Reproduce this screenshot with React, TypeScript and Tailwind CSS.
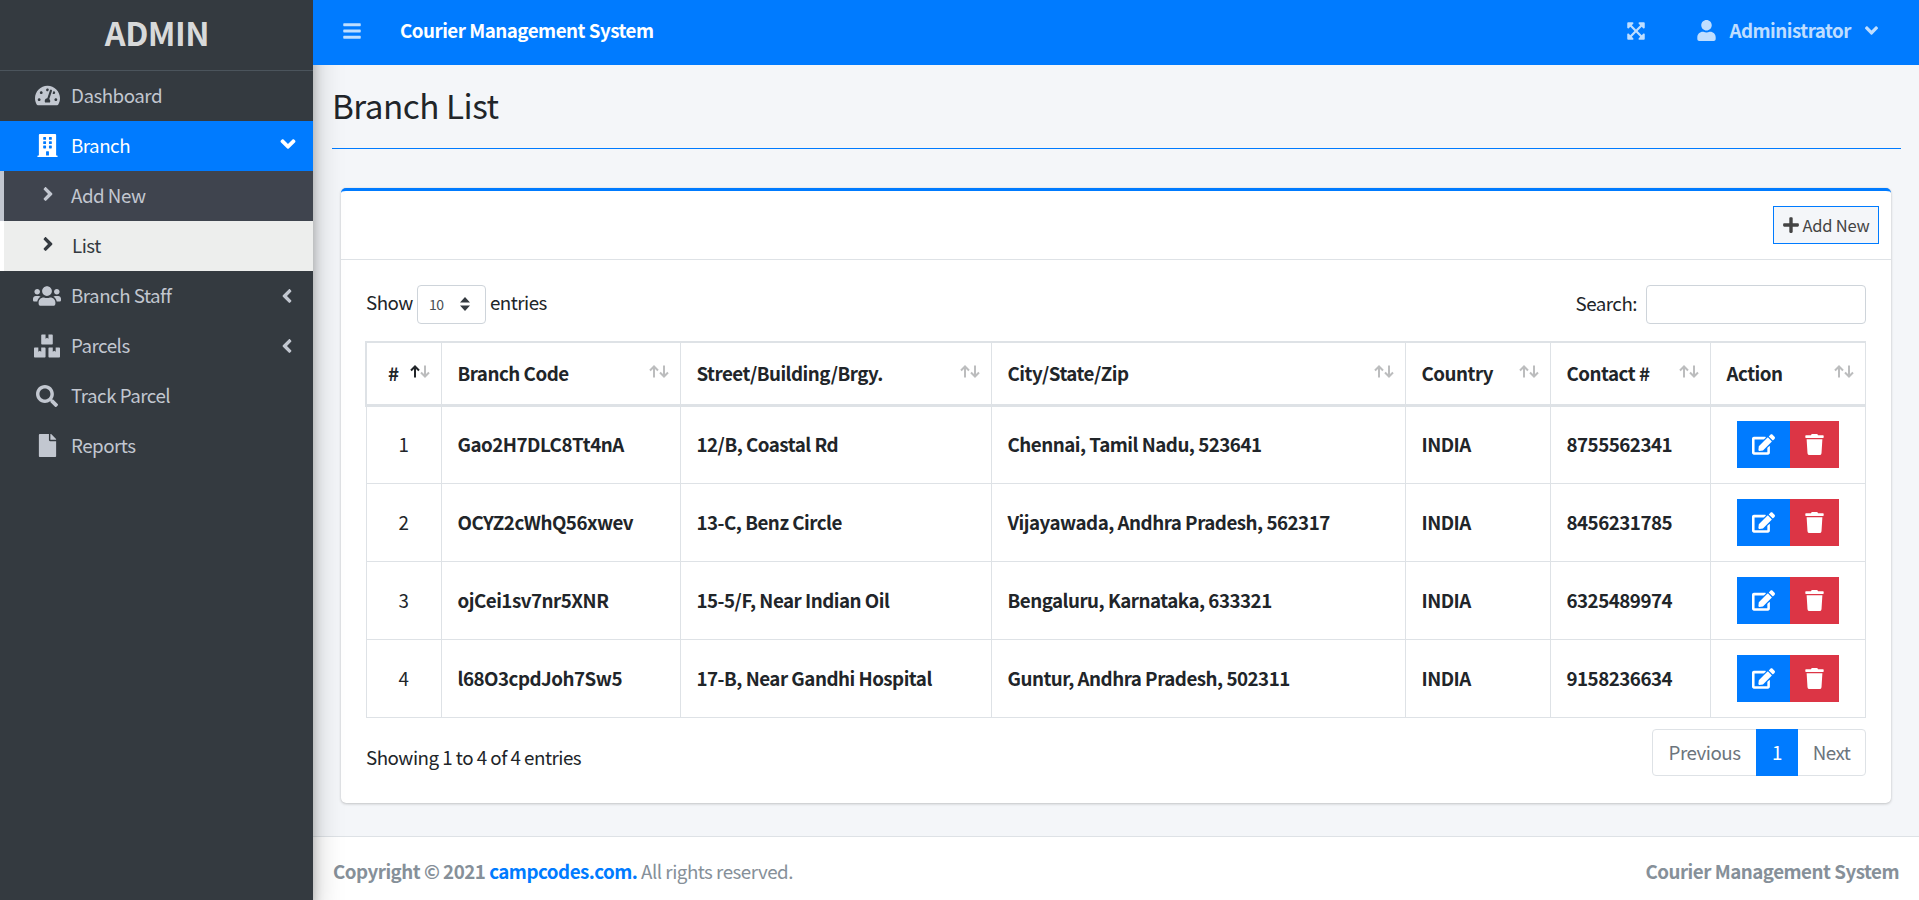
import React from 'react';
import {
  FaTachometerAlt,
  FaBuilding,
  FaAngleDown,
  FaAngleLeft,
  FaAngleRight,
  FaUsers,
  FaBoxes,
  FaSearch,
  FaFile,
  FaBars,
  FaExpandArrowsAlt,
  FaUser,
  FaPlus,
  FaEdit,
  FaTrash,
} from 'react-icons/fa';

const branches = [
  { id: 1, code: 'Gao2H7DLC8Tt4nA', street: '12/B, Coastal Rd', city: 'Chennai, Tamil Nadu, 523641', country: 'INDIA', contact: '8755562341' },
  { id: 2, code: 'OCYZ2cWhQ56xwev', street: '13-C, Benz Circle', city: 'Vijayawada, Andhra Pradesh, 562317', country: 'INDIA', contact: '8456231785' },
  { id: 3, code: 'ojCei1sv7nr5XNR', street: '15-5/F, Near Indian Oil', city: 'Bengaluru, Karnataka, 633321', country: 'INDIA', contact: '6325489974' },
  { id: 4, code: 'l68O3cpdJoh7Sw5', street: '17-B, Near Gandhi Hospital', city: 'Guntur, Andhra Pradesh, 502311', country: 'INDIA', contact: '9158236634' },
];

const columns = ['Branch Code', 'Street/Building/Brgy.', 'City/State/Zip', 'Country', 'Contact #', 'Action'];

function SortArrows({ active }: { active?: boolean }) {
  return (
    <svg width="20" height="13" viewBox="0 0 20 13" fill="none" strokeWidth="2" className="mt-[-3px] shrink-0">
      <g stroke="#212529" strokeOpacity={active ? 1 : 0.3}>
        <path d="M5 12.5V1.5M1 5.5l4-4 4 4" />
      </g>
      <g stroke="#212529" strokeOpacity="0.3">
        <path d="M15 .5v11M11 7.5l4 4 4-4" />
      </g>
    </svg>
  );
}

function NavItem({ icon, label, right }: { icon: React.ReactNode; label: string; right?: React.ReactNode }) {
  return (
    <div className="flex h-[50px] items-center pb-[1px] text-[#c2c7d0]">
      <span className="ml-[33px] flex w-[28px] shrink-0 justify-center">{icon}</span>
      <span className="ml-[10px]">{label}</span>
      <span className="ml-auto mr-[15px] text-[22px]">{right}</span>
    </div>
  );
}

export default function App() {
  return (
    <div className="flex h-screen overflow-hidden bg-[#f4f6f9] font-['Noto_Sans_CJK_SC','Noto_Sans',sans-serif] text-[18.75px] tracking-[-0.5px] text-[#212529]">
      {/* Sidebar */}
      <aside className="relative z-10 w-[313px] shrink-0 bg-[#343a40] shadow-[0_14px_28px_rgba(0,0,0,0.25),0_10px_10px_rgba(0,0,0,0.22)]">
        <div className="flex h-[71px] items-center justify-center border-b border-[#4b545c] pb-[6px] pl-[1px] text-[32.5px] font-bold text-[#d8d9da]">
          ADMIN
        </div>
        <NavItem icon={<FaTachometerAlt className="text-[25px]" />} label="Dashboard" />
        <div className="flex h-[50px] items-center bg-[#007bff] pb-[1px] text-white">
          <span className="ml-[33px] flex w-[28px] shrink-0 justify-center"><FaBuilding className="text-[23px]" /></span>
          <span className="ml-[10px]">Branch</span>
          <FaAngleDown className="ml-auto mr-[13px] mt-[-3px] text-[24px]" />
        </div>
        <div className="flex h-[50px] items-center border-l-4 border-[#c2c7d0] bg-[#3f444e] pb-[1px] text-[#c2c7d0]">
          <FaAngleRight className="ml-[33px] mt-[-3px] text-[22px]" />
          <span className="ml-[12px]">Add New</span>
        </div>
        <div className="flex h-[50px] items-center border-l-4 border-white bg-[#edeeed] pb-[1px] text-[#343a40]">
          <FaAngleRight className="ml-[33px] mt-[-3px] text-[22px]" />
          <span className="ml-[13px]">List</span>
        </div>
        <NavItem icon={<FaUsers className="text-[28px]" />} label="Branch Staff" right={<FaAngleLeft />} />
        <NavItem icon={<FaBoxes className="text-[26px]" />} label="Parcels" right={<FaAngleLeft />} />
        <NavItem icon={<FaSearch className="text-[22px]" />} label="Track Parcel" />
        <NavItem icon={<FaFile className="text-[23px]" />} label="Reports" />
      </aside>

      <div className="flex min-w-0 flex-1 flex-col">
        {/* Top bar */}
        <header className="relative z-20 flex h-[65px] shrink-0 items-center bg-[#007bff] pb-[4px]">
          <FaBars className="ml-[29px] text-[20px] text-white/75" />
          <span className="ml-[38px] font-bold text-white">Courier Management System</span>
          <FaExpandArrowsAlt className="ml-auto text-[20px] text-white/75" />
          <FaUser className="ml-[50px] text-[21px] text-white/75" />
          <span className="ml-[12px] font-bold text-white/75">Administrator</span>
          <FaAngleDown className="ml-[10px] mr-[37px] text-[21px] text-white/75" />
        </header>

        {/* Page heading */}
        <div className="ml-[19px] mr-[18px] flex h-[84px] shrink-0 items-center border-b border-[#007bff] pb-[3px]">
          <h1 className="text-[33.25px] font-normal">Branch List</h1>
        </div>

        {/* Card */}
        <main className="mx-[28px] mt-[39px] h-[615px] shrink-0 rounded-[5px] border-t-[3px] border-[#007bff] bg-white shadow-[0_0_1px_rgba(0,0,0,0.13),0_1px_3px_rgba(0,0,0,0.2)]">
          <div className="flex h-[69px] items-start justify-end border-b border-[#dee2e6] pr-[12px] pt-[15px]">
            <button className="flex h-[38px] w-[106px] items-center justify-center border border-[#007bff] bg-[#f4f6f9] text-[16.5px] tracking-[-0.2px] text-[#444]">
              <FaPlus className="mr-[2px] text-[18px]" />
              Add New
            </button>
          </div>

          <div className="px-[25px] pt-[24px]">
            <div className="flex h-[40px] items-center justify-between">
              <div className="flex items-center">
                <span className="mt-[-4px]">Show</span>
                <span className="mx-[4px] flex h-[39px] w-[69px] items-center justify-between rounded-[4px] border border-[#ced4da] pl-[11px] pr-[15px] text-[14px] text-[#495057]">
                  10
                  <svg width="10" height="14" viewBox="0 0 10 14" fill="#343a40">
                    <path d="M5 0 L10 5.5 H0 Z M5 14 L0 8.5 H10 Z" />
                  </svg>
                </span>
                <span className="mt-[-4px]">entries</span>
              </div>
              <div className="flex items-center">
                <span className="mr-[9px] mt-[-2px]">Search:</span>
                <span className="h-[39px] w-[220px] rounded-[4px] border border-[#ced4da]" />
              </div>
            </div>

            <table className="ml-[-1px] mt-[17px] w-[1499px] table-fixed border-collapse">
              <colgroup>
                <col className="w-[75px]" />
                <col className="w-[239px]" />
                <col className="w-[311px]" />
                <col className="w-[414px]" />
                <col className="w-[145px]" />
                <col className="w-[160px]" />
                <col className="w-[155px]" />
              </colgroup>
              <thead>
                <tr className="h-[63px] border-b-[3px] border-[#dee2e6]">
                  <th className="border-2 border-b-0 border-r border-[#dee2e6] pl-[21px] pr-[11px] text-left font-bold">
                    <div className="flex items-center justify-between">
                      # <SortArrows active />
                    </div>
                  </th>
                  {columns.map((col) => (
                    <th key={col} className="border-x border-t-2 border-[#dee2e6] pl-[16px] pr-[11px] text-left font-bold">
                      <div className="flex items-center justify-between">
                        {col} <SortArrows />
                      </div>
                    </th>
                  ))}
                </tr>
              </thead>
              <tbody>
                {branches.map((b) => (
                  <tr key={b.id} className="h-[78px] border-b border-[#dee2e6] font-bold">
                    <td className="border border-[#dee2e6] text-center font-normal">{b.id}</td>
                    <td className="border border-[#dee2e6] pl-[16px]">{b.code}</td>
                    <td className="border border-[#dee2e6] pl-[16px]">{b.street}</td>
                    <td className="border border-[#dee2e6] pl-[16px]">{b.city}</td>
                    <td className="border border-[#dee2e6] pl-[16px]">{b.country}</td>
                    <td className="border border-[#dee2e6] pl-[16px]">{b.contact}</td>
                    <td className="border border-[#dee2e6]">
                      <div className="flex justify-center">
                        <span className="flex h-[47px] w-[53px] items-center justify-center bg-[#007bff] text-[23px] text-white">
                          <FaEdit />
                        </span>
                        <span className="flex h-[47px] w-[49px] items-center justify-center bg-[#dc3545] text-[21px] text-white">
                          <FaTrash />
                        </span>
                      </div>
                    </td>
                  </tr>
                ))}
              </tbody>
            </table>

            <div className="mt-[11px] flex items-start justify-between">
              <span className="mt-[14px]">Showing 1 to 4 of 4 entries</span>
              <div className="flex h-[47px] items-center rounded-[4px] border border-[#dee2e6]">
                <span className="flex h-[47px] w-[103px] items-center justify-center text-[#6c757d]">Previous</span>
                <span className="flex h-[47px] w-[42px] items-center justify-center bg-[#007bff] text-white">1</span>
                <span className="flex h-[47px] w-[67px] items-center justify-center text-[#6c757d]">Next</span>
              </div>
            </div>
          </div>
        </main>

        {/* Footer */}
        <footer className="mt-[33px] flex flex-1 items-center justify-between border-t border-[#dee2e6] bg-white px-[20px] pt-[6px] text-[#869099]">
          <span>
            <strong>Copyright © 2021 <span className="text-[#007bff]">campcodes.com.</span></strong> All rights reserved.
          </span>
          <strong>Courier Management System</strong>
        </footer>
      </div>
    </div>
  );
}
